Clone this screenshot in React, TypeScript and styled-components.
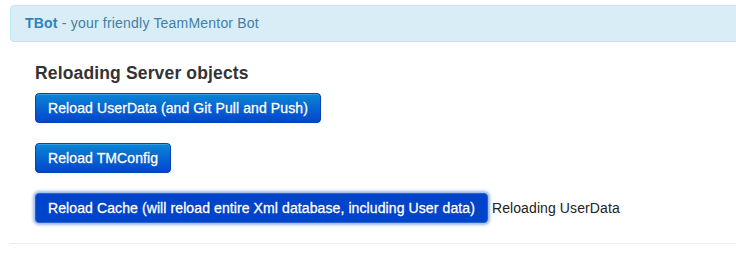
import styled, { createGlobalStyle } from 'styled-components';

const GlobalStyle = createGlobalStyle`
  body {
    margin: 0;
    background: #fff;
    overflow: hidden;
    font-family: "Liberation Sans", Arial, sans-serif;
    font-size: 14px;
    line-height: 20px;
    color: #333;
  }
`;

const Page = styled.div`
  padding: 5px 0 0 10px;
  width: 760px;
`;

const Alert = styled.div`
  padding: 8px 35px 8px 14px;
  background: #d9edf7;
  border: 1px solid #bce8f1;
  border-radius: 4px;
  color: #3f7fa8;
  font-size: 14px;
  line-height: 19px;
  letter-spacing: 0.2px;

  strong {
    font-weight: bold;
    color: #2c82c0;
  }
`;

const Section = styled.div`
  padding: 21px 0 0 25px;
`;

const Heading = styled.h4`
  margin: 0 0 10px;
  font-size: 17.5px;
  line-height: 20px;
  font-weight: bold;
  letter-spacing: 0.15px;
  color: #333;
`;

const Row = styled.div`
  display: flex;
  align-items: center;
  gap: 4px;
  margin-bottom: 20px;
`;

const Button = styled.button<{ $focused?: boolean }>`
  display: inline-block;
  padding: 4px 12px;
  font-family: "Liberation Sans", Arial, sans-serif;
  font-size: 14px;
  line-height: 20px;
  letter-spacing: 0.1px;
  -webkit-text-stroke: 0.3px #fff;
  color: #fff;
  text-shadow: 0 -1px 0 rgba(0, 0, 0, 0.25);
  background-color: #0044cc;
  background-image: ${(p) =>
    p.$focused ? 'none' : 'linear-gradient(to bottom, #0a86d6, #0345cc)'};
  border: 1px solid ${(p) => (p.$focused ? '#2a62cf' : '#0344b8')};
  border-radius: 4px;
  box-shadow: ${(p) =>
    p.$focused
      ? '0 0 3px 2px rgba(120, 160, 225, 0.75)'
      : 'inset 0 1px 0 rgba(255, 255, 255, 0.2), 0 1px 2px rgba(0, 0, 0, 0.05)'};
  cursor: pointer;
`;

const Status = styled.span`
  color: #222;
  font-size: 14px;
  letter-spacing: 0.1px;
`;

const Rule = styled.hr`
  margin: 0;
  border: 0;
  border-top: 1px solid #eee;
  border-bottom: 1px solid #fff;
`;

export default function App() {
  return (
    <>
      <GlobalStyle />
      <Page>
        <Alert>
          <strong>TBot</strong> - your friendly TeamMentor Bot
        </Alert>
        <Section>
          <Heading>Reloading Server objects</Heading>
          <Row>
            <Button>Reload UserData (and Git Pull and Push)</Button>
          </Row>
          <Row>
            <Button>Reload TMConfig</Button>
          </Row>
          <Row>
            <Button $focused>
              Reload Cache (will reload entire Xml database, including User data)
            </Button>
            <Status>Reloading UserData</Status>
          </Row>
        </Section>
        <Rule />
      </Page>
    </>
  );
}
